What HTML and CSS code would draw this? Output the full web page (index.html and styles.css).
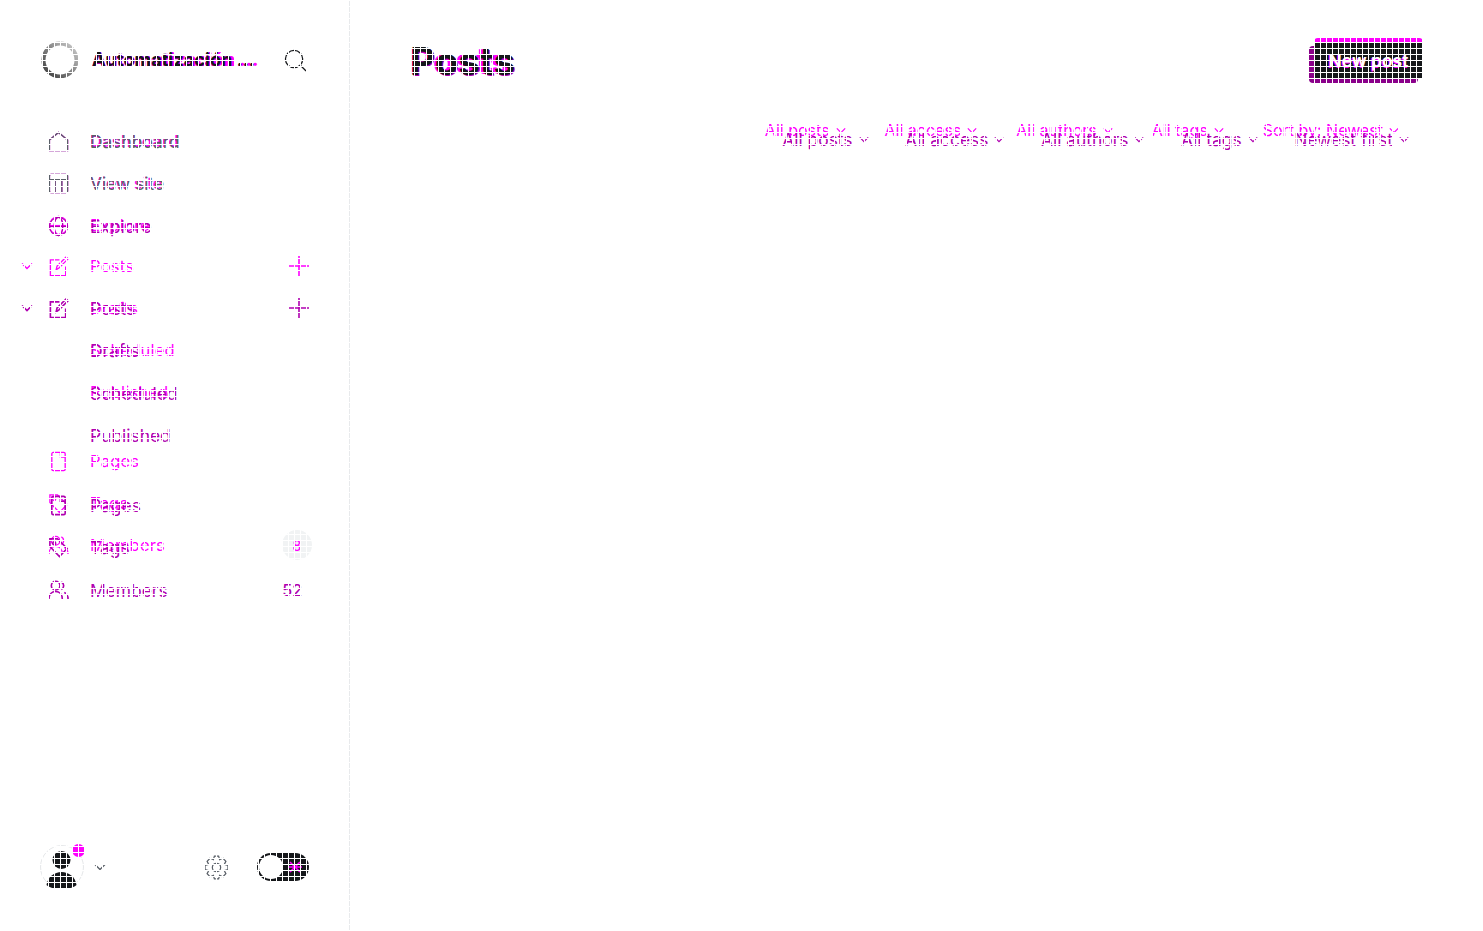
FILE: index.html
```html
<!DOCTYPE html>
<html lang="en">
<head>
<meta charset="utf-8">
<title>Posts</title>
<link rel="stylesheet" href="styles.css">
</head>
<body>
<svg class="defs" aria-hidden="true">
  <symbol id="i-home" viewBox="0 0 22 22"><path d="M1.5 9.5 11 1.5l9.5 8v11h-19z"/></symbol>
  <symbol id="i-site" viewBox="0 0 22 22"><rect x="1.5" y="1.5" width="19" height="19" rx="1.5"/><path d="M1.5 7h19M7.5 7v13.5M14.5 7v13.5"/></symbol>
  <symbol id="i-globe" viewBox="0 0 22 22"><circle cx="11" cy="11" r="9.5"/><ellipse cx="11" cy="11" rx="4.5" ry="9.5"/><path d="M1.5 11h19"/></symbol>
  <symbol id="i-post" viewBox="0 0 22 22"><path d="M12 4H2.5v16.5h16V11"/><path d="M8.5 14.5l1-4L19 1l2 2-9.5 9.5z"/></symbol>
  <symbol id="i-page" viewBox="0 0 22 22"><rect x="4" y="1.5" width="14" height="19" rx="1.5"/><path d="M13 1.5v5h5"/></symbol>
  <symbol id="i-tag" viewBox="0 0 22 22"><path d="M2 2h8l10 10-8 8.500L2 10z"/><circle cx="6.500" cy="6.500" r="1.500"/></symbol>
  <symbol id="i-user" viewBox="0 0 22 22"><circle cx="8" cy="6" r="4.500"/><path d="M1 20c0-5 3-8 7-8s7 3 7 8"/><path d="M14 2a4.500 4.500 0 0 1 0 8M17 13c2.500 1 4 3.500 4 7"/></symbol>
  <symbol id="i-plus" viewBox="0 0 22 22"><path d="M11 1v20M1 11h20"/></symbol>
  <symbol id="i-chev" viewBox="0 0 12 8"><path d="M1 1.500l5 5 5-5"/></symbol>
  <symbol id="i-search" viewBox="0 0 24 24"><circle cx="10.500" cy="10.500" r="9"/><path d="M17 17l6 6"/></symbol>
  <symbol id="i-gear" viewBox="0 0 24 24"><path d="M10 1h4l1 3.500 3-1.500 3 3-1.500 3L23 10v4l-3.500 1 1.500 3-3 3-3-1.500L14 23h-4l-1-3.500L6 21l-3-3 1.500-3L1 14v-4l3.500-1L3 6l3-3 3 1.500z"/><circle cx="12" cy="12" r="4"/></symbol>
</svg>

<div class="stage">
  <!-- later revision of the screen -->
  <div class="app app-new">
    <aside class="side">
      <header class="brand">
        <span class="logo"></span>
        <span class="brand-name">Automatización ...</span>
      </header>
      <nav class="nav">
        <a class="row row-strong"><span></span><svg class="ic"><use href="#i-home"/></svg><span class="lbl">Dashboard</span></a>
        <a class="row"><span></span><svg class="ic"><use href="#i-site"/></svg><span class="lbl">View site</span></a>
        <a class="row row-last"><span></span><svg class="ic"><use href="#i-globe"/></svg><span class="lbl">Explore</span></a>
        <a class="row"><svg class="chev"><use href="#i-chev"/></svg><svg class="ic"><use href="#i-post"/></svg><span class="lbl">Posts</span><svg class="plus"><use href="#i-plus"/></svg></a>
        <a class="row"><span></span><span></span><span class="lbl">Drafts</span></a>
        <a class="row"><span></span><span></span><span class="lbl">Scheduled</span></a>
        <a class="row"><span></span><span></span><span class="lbl">Published</span></a>
        <a class="row row-gap"><span></span><svg class="ic"><use href="#i-page"/></svg><span class="lbl">Pages</span></a>
        <a class="row"><span></span><svg class="ic"><use href="#i-tag"/></svg><span class="lbl">Tags</span></a>
        <a class="row"><span></span><svg class="ic"><use href="#i-user"/></svg><span class="lbl">Members</span><span class="badge">8</span></a>
      </nav>
    </aside>
    <main class="main">
      <div class="top">
        <h1 class="title">Posts</h1>
      </div>
      <div class="filters">
        <span class="fl">All posts<svg class="fchev"><use href="#i-chev"/></svg></span>
        <span class="fl">All access<svg class="fchev"><use href="#i-chev"/></svg></span>
        <span class="fl">All authors<svg class="fchev"><use href="#i-chev"/></svg></span>
        <span class="fl">All tags<svg class="fchev"><use href="#i-chev"/></svg></span>
        <span class="fl">Sort by: Newest<svg class="fchev"><use href="#i-chev"/></svg></span>
      </div>
    </main>
  </div>

  <!-- earlier revision, laid over the later one -->
  <div class="app app-old">
    <aside class="side">
      <header class="brand">
        <svg class="logo-ring" viewBox="0 0 38 38"><defs><linearGradient id="ring" x1="0" y1="1" x2="1" y2="0"><stop offset="0" stop-color="#3a3a3a"/><stop offset=".55" stop-color="#8a8a8a"/><stop offset="1" stop-color="#cfcfcf"/></linearGradient></defs><circle cx="19" cy="19" r="16.500" fill="none" stroke="url(#ring)" stroke-width="4"/></svg>
        <span class="brand-name">Automatización ...</span>
        <svg class="search"><use href="#i-search"/></svg>
      </header>
      <nav class="nav">
        <a class="row row-shared"><span></span><svg class="ic"><use href="#i-home"/></svg><span class="lbl">Dashboard</span></a>
        <a class="row row-shared"><span></span><svg class="ic"><use href="#i-site"/></svg><span class="lbl">View site</span></a>
        <a class="row row-last"><span></span><svg class="ic"><use href="#i-globe"/></svg><span class="lbl">Explore</span></a>
        <a class="row"><svg class="chev"><use href="#i-chev"/></svg><svg class="ic"><use href="#i-post"/></svg><span class="lbl">Posts</span><svg class="plus"><use href="#i-plus"/></svg></a>
        <a class="row"><span></span><span></span><span class="lbl">Drafts</span></a>
        <a class="row"><span></span><span></span><span class="lbl">Scheduled</span></a>
        <a class="row"><span></span><span></span><span class="lbl">Published</span></a>
        <a class="row row-gap"><span></span><svg class="ic"><use href="#i-page"/></svg><span class="lbl">Pages</span></a>
        <a class="row"><span></span><svg class="ic"><use href="#i-tag"/></svg><span class="lbl">Tags</span></a>
        <a class="row"><span></span><svg class="ic"><use href="#i-user"/></svg><span class="lbl">Members</span><span class="count">52</span></a>
      </nav>
      <footer class="foot">
        <span class="avatar">
          <svg class="person" viewBox="0 0 44 44"><circle cx="21.500" cy="15" r="9"/><path d="M6.500 40c1-8 8-13 15-13s14 5 15 13c-4 3.500-9 4-15 4s-11-.5-15-4z"/></svg>
          <span class="dot"></span>
        </span>
        <svg class="foot-chev"><use href="#i-chev"/></svg>
        <svg class="gear"><use href="#i-gear"/></svg>
        <span class="toggle"><span class="knob"></span><svg class="sun" viewBox="0 0 14 14"><path d="M2 2l10 10M12 2 2 12M0 7h14"/></svg></span>
      </footer>
    </aside>
    <main class="main">
      <div class="top">
        <h1 class="title">Posts</h1>
        <button class="new">New post</button>
      </div>
      <div class="filters">
        <span class="fl">All posts<svg class="fchev"><use href="#i-chev"/></svg></span>
        <span class="fl">All access<svg class="fchev"><use href="#i-chev"/></svg></span>
        <span class="fl">All authors<svg class="fchev"><use href="#i-chev"/></svg></span>
        <span class="fl">All tags<svg class="fchev"><use href="#i-chev"/></svg></span>
        <span class="fl">Newest first<svg class="fchev"><use href="#i-chev"/></svg></span>
      </div>
    </main>
  </div>

  <div class="mesh" aria-hidden="true"></div>
</div>
</body>
</html>
```

FILE: styles.css
```css
* { box-sizing: border-box; }

html, body {
  margin: 0;
  height: 100%;
  background: #fff;
  overflow: hidden;
}

.defs { position: absolute; width: 0; height: 0; }

.stage {
  position: relative;
  width: 1483px;
  height: 931px;
  font-family: Inter, "Liberation Sans", sans-serif;
}

.app {
  display: flex;
  width: 100%;
  height: 100%;
  --ink: #ff00ff;
  --stroke: 1.4;
}

.app-old {
  position: absolute;
  inset: 0;
  --ink: #b000b0;
  --stroke: 1.7;
}

.side {
  display: flex;
  flex-direction: column;
  flex: 0 0 350px;
  border-right: 1px solid #e8eaec;
  padding: 41px 0 42px;
}

.brand {
  display: flex;
  align-items: center;
  height: 38px;
  padding: 0 42px 0 41px;
}

.logo { flex: 0 0 37px; height: 37px; }
.logo-ring { flex: 0 0 38px; width: 38px; height: 38px; }

.brand-name {
  margin: 0 0 2px 14px;
  font-size: 18.200px;
  font-weight: 800;
  color: #ff00ff;
  white-space: nowrap;
}

.app-old .brand-name {
  margin-left: 13px;
  font-size: 18.200px;
  font-weight: 700;
  color: #15171a;
  text-shadow: 0 1px 0 #b000b0;
}

.search {
  flex: 0 0 23px;
  width: 23px;
  height: 23px;
  margin-left: auto;
  fill: none;
  stroke: #15171a;
  stroke-width: 1.3;
}

.nav {
  display: flex;
  flex-direction: column;
  margin-top: 41px;
}

.row {
  display: grid;
  grid-template-columns: 27px 42px 1fr auto;
  align-items: center;
  height: 42px;
  padding: 0 39px 0 21px;
  color: var(--ink);
  font-size: 16.500px;
  letter-spacing: .2px;
}

.app-old .row { height: 42.5px; font-size: 17.4px; letter-spacing: 0; }

.row-strong { font-weight: 600; }
.row-last { margin-bottom: -1px; }
.app-old .row-last { margin-bottom: 39.500px; }
.row-gap { margin-top: 27px; }

.row-shared { color: #5a6068; --ink: #5a6068; --stroke: 1.4; }

.row-last .ic { stroke-width: 1.2; }

.lbl { white-space: nowrap; }

.ic, .plus, .chev {
  fill: none;
  stroke: var(--ink);
  stroke-width: var(--stroke);
}
.ic { width: 21px; height: 21px; }
.plus { width: 22px; height: 22px; stroke-width: 1.6; }
.chev { width: 12px; height: 8px; }

.badge {
  display: flex;
  align-items: center;
  justify-content: center;
  width: 30px;
  height: 30px;
  margin-right: -2px;
  border-radius: 50%;
  background: #f1f3f4;
  font-size: 14px;
  font-weight: 500;
  color: #ff00ff;
}

.count { font-size: 16px; font-weight: 500; margin-right: 8px; }

.foot {
  display: flex;
  align-items: center;
  margin-top: auto;
  padding: 0 40px;
}

.avatar {
  position: relative;
  flex: 0 0 44px;
  width: 44px;
  height: 44px;
  border: 1px solid #e6e8ea;
  border-radius: 50%;
}

.person { position: absolute; inset: -1px; width: 44px; height: 44px; fill: #15171a; }

.dot {
  position: absolute;
  top: -2px;
  right: -2px;
  width: 13px;
  height: 13px;
  border-radius: 50%;
  background: #ff00ff;
}

.foot-chev {
  width: 14px;
  height: 8px;
  margin-left: 9px;
  fill: none;
  stroke: #5a6068;
  stroke-width: 1.3;
}

.gear {
  width: 25px;
  height: 25px;
  margin-left: auto;
  fill: none;
  stroke: #5a6068;
  stroke-width: 1.2;
}

.toggle {
  position: relative;
  display: flex;
  align-items: center;
  justify-content: flex-end;
  width: 52px;
  height: 28px;
  margin-left: 28px;
  padding: 3px 7px 3px 3px;
  border-radius: 14px;
  background: #15171a;
}

.knob {
  position: absolute;
  left: 2px;
  top: 2px;
  width: 24px;
  height: 24px;
  border-radius: 50%;
  background: #fff;
}

.sun { width: 14px; height: 14px; fill: none; stroke: #ff00ff; stroke-width: 1.6; }

.main { flex: 1; display: flex; flex-direction: column; min-width: 0; }

.top {
  display: flex;
  align-items: center;
  justify-content: space-between;
  height: 80px;
  padding: 41px 60px 0 60px;
}

.title {
  margin: 0;
  font-size: 36px;
  font-weight: 800;
  line-height: 40px;
  color: #ff00ff;
}

.app-old .title {
  font-size: 38.500px;
  font-weight: 700;
  color: #15171a;
  text-shadow: 1px 1px 0 #b000b0;
}

.new {
  width: 109px;
  height: 37px;
  margin: 0;
  border: 0;
  border-radius: 4px;
  background: #15171a;
  box-shadow: 0 -4px 0 #ff00ff, -5px 4px 0 #8a008a;
  color: #fff;
  font: 600 17.500px Inter, sans-serif;
  text-shadow: -1px 1px 0 #ff00ff;
}

.filters {
  display: flex;
  justify-content: flex-end;
  gap: 39px;
  margin-top: 39px;
  padding-right: 84px;
  height: 22px;
  align-items: center;
  font-size: 16px;
  color: #ff00ff;
}

.app-old .filters {
  gap: 36.500px;
  margin-top: 48px;
  padding-right: 74px;
  font-size: 17.400px;
  color: #b000b0;
}

.fl { display: flex; align-items: center; gap: 6px; white-space: nowrap; }

.fchev {
  width: 10px;
  height: 7px;
  fill: none;
  stroke: currentColor;
  stroke-width: 1.5;
}

.mesh {
  position: absolute;
  inset: 0;
  pointer-events: none;
  background-image:
    linear-gradient(#fff 1px, transparent 1px),
    linear-gradient(90deg, #fff 1px, transparent 1px);
  background-size: 6px 6px;
}
```
